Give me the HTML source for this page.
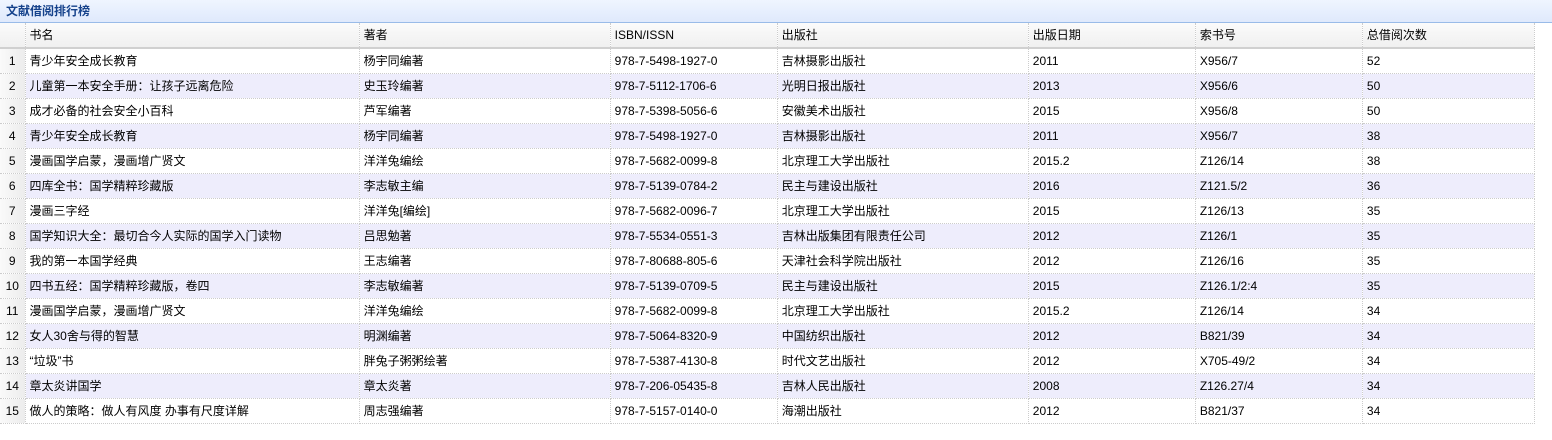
<!DOCTYPE html>
<html><head><meta charset="utf-8"><style>
*{margin:0;padding:0;box-sizing:border-box}
body{width:1552px;height:440px;background:#fff;font-family:"Liberation Sans","Noto Sans CJK SC",sans-serif;font-size:12px;color:#000;overflow:hidden}
.title{height:23px;background:linear-gradient(#eff5ff,#dfe9fc);border-bottom:1px solid #99bbe8;color:#15428b;font-weight:bold;font-size:12px;line-height:22px;padding-left:6px}
table{border-collapse:collapse;table-layout:fixed;width:1535px}
td{height:25px;border-right:1px dotted #ccc;border-bottom:1px dotted #ccc;padding-left:4px;white-space:nowrap;overflow:hidden;line-height:24px}
tr.h td{background:linear-gradient(#fbfbfb,#f0f0f0);border-bottom:2px solid #d0d0d0;height:25px;padding-left:4px}
td.n{background:linear-gradient(90deg,#fafafa,#ececec);text-align:center;padding:0}
tr:nth-child(odd) td{background-color:#eeedfc}
tr:nth-child(odd) td.n{background:linear-gradient(90deg,#fafafa,#ececec)}
tr.h td{background:linear-gradient(#fbfbfb,#f0f0f0)!important}
</style></head><body>
<div class="title">文献借阅排行榜</div>
<table>
<colgroup><col style="width:25px"><col style="width:334px"><col style="width:251px"><col style="width:167px"><col style="width:251px"><col style="width:167px"><col style="width:167px"><col style="width:172px"></colgroup>
<tr class="h"><td class="n"></td><td>书名</td><td>著者</td><td>ISBN/ISSN</td><td>出版社</td><td>出版日期</td><td>索书号</td><td>总借阅次数</td></tr>
<tr><td class="n">1</td><td>青少年安全成长教育</td><td>杨宇同编著</td><td>978-7-5498-1927-0</td><td>吉林摄影出版社</td><td>2011</td><td>X956/7</td><td>52</td></tr>
<tr><td class="n">2</td><td>儿童第一本安全手册：让孩子远离危险</td><td>史玉玲编著</td><td>978-7-5112-1706-6</td><td>光明日报出版社</td><td>2013</td><td>X956/6</td><td>50</td></tr>
<tr><td class="n">3</td><td>成才必备的社会安全小百科</td><td>芦军编著</td><td>978-7-5398-5056-6</td><td>安徽美术出版社</td><td>2015</td><td>X956/8</td><td>50</td></tr>
<tr><td class="n">4</td><td>青少年安全成长教育</td><td>杨宇同编著</td><td>978-7-5498-1927-0</td><td>吉林摄影出版社</td><td>2011</td><td>X956/7</td><td>38</td></tr>
<tr><td class="n">5</td><td>漫画国学启蒙，漫画增广贤文</td><td>洋洋兔编绘</td><td>978-7-5682-0099-8</td><td>北京理工大学出版社</td><td>2015.2</td><td>Z126/14</td><td>38</td></tr>
<tr><td class="n">6</td><td>四库全书：国学精粹珍藏版</td><td>李志敏主编</td><td>978-7-5139-0784-2</td><td>民主与建设出版社</td><td>2016</td><td>Z121.5/2</td><td>36</td></tr>
<tr><td class="n">7</td><td>漫画三字经</td><td>洋洋兔[编绘]</td><td>978-7-5682-0096-7</td><td>北京理工大学出版社</td><td>2015</td><td>Z126/13</td><td>35</td></tr>
<tr><td class="n">8</td><td>国学知识大全：最切合今人实际的国学入门读物</td><td>吕思勉著</td><td>978-7-5534-0551-3</td><td>吉林出版集团有限责任公司</td><td>2012</td><td>Z126/1</td><td>35</td></tr>
<tr><td class="n">9</td><td>我的第一本国学经典</td><td>王志编著</td><td>978-7-80688-805-6</td><td>天津社会科学院出版社</td><td>2012</td><td>Z126/16</td><td>35</td></tr>
<tr><td class="n">10</td><td>四书五经：国学精粹珍藏版，卷四</td><td>李志敏编著</td><td>978-7-5139-0709-5</td><td>民主与建设出版社</td><td>2015</td><td>Z126.1/2:4</td><td>35</td></tr>
<tr><td class="n">11</td><td>漫画国学启蒙，漫画增广贤文</td><td>洋洋兔编绘</td><td>978-7-5682-0099-8</td><td>北京理工大学出版社</td><td>2015.2</td><td>Z126/14</td><td>34</td></tr>
<tr><td class="n">12</td><td>女人30舍与得的智慧</td><td>明渊编著</td><td>978-7-5064-8320-9</td><td>中国纺织出版社</td><td>2012</td><td>B821/39</td><td>34</td></tr>
<tr><td class="n">13</td><td>“垃圾”书</td><td>胖兔子粥粥绘著</td><td>978-7-5387-4130-8</td><td>时代文艺出版社</td><td>2012</td><td>X705-49/2</td><td>34</td></tr>
<tr><td class="n">14</td><td>章太炎讲国学</td><td>章太炎著</td><td>978-7-206-05435-8</td><td>吉林人民出版社</td><td>2008</td><td>Z126.27/4</td><td>34</td></tr>
<tr><td class="n">15</td><td>做人的策略：做人有风度 办事有尺度详解</td><td>周志强编著</td><td>978-7-5157-0140-0</td><td>海潮出版社</td><td>2012</td><td>B821/37</td><td>34</td></tr>
</table>
</body></html>
